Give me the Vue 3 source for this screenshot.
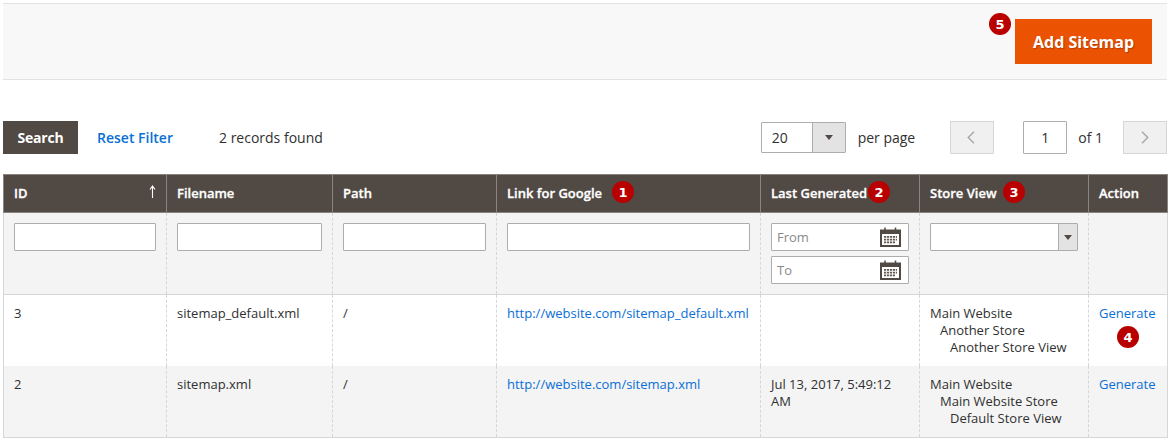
<template>
  <div class="page">
    <div class="page-actions">
      <span class="badge">5</span>
      <button class="add-btn">Add Sitemap</button>
    </div>

    <div class="toolbar">
      <button class="search-btn">Search</button>
      <a class="reset-link">Reset Filter</a>
      <span class="records">2 records found</span>
      <div class="pager">
        <div class="per-page">
          <span class="per-value">20</span>
          <span class="per-arrow"><i class="caret"></i></span>
        </div>
        <span class="per-label">per page</span>
        <button class="page-btn prev">
          <svg width="8" height="13" viewBox="0 0 8 13"><path d="M7 .7 1.300 6.500 7 12.300" fill="none" stroke="#a9a9a9" stroke-width="1.500" /></svg>
        </button>
        <div class="page-input">1</div>
        <span class="page-of">of 1</span>
        <button class="page-btn">
          <svg width="8" height="13" viewBox="0 0 8 13"><path d="M1 .7 6.700 6.500 1 12.300" fill="none" stroke="#a9a9a9" stroke-width="1.500" /></svg>
        </button>
      </div>
    </div>

    <table class="grid">
      <colgroup>
        <col v-for="w in colWidths" :key="w" :style="{ width: w + 'px' }" />
      </colgroup>
      <thead>
        <tr>
          <th class="sorted">ID
            <svg class="sort-arrow" width="7" height="13" viewBox="0 0 7 13"><path d="M3.500 13V1.500M1 4.500 3.500 1 6 4.500" fill="none" stroke="#fff" stroke-width="1.100" /></svg>
          </th>
          <th>Filename</th>
          <th>Path</th>
          <th>Link for Google<span class="badge in-head first">1</span></th>
          <th>Last Generated<span class="badge in-head second">2</span></th>
          <th>Store View<span class="badge in-head third">3</span></th>
          <th>Action</th>
        </tr>
      </thead>
      <tbody>
        <tr class="filters">
          <td><input class="text-input" /></td>
          <td><input class="text-input" /></td>
          <td><input class="text-input" /></td>
          <td><input class="text-input" /></td>
          <td>
            <div v-for="label in ['From', 'To']" :key="label" class="date-input">
              <span>{{ label }}</span>
              <svg width="21" height="20" viewBox="0 0 21 20">
                <path d="M0 2.500h21V20H0z" fill="#514943" />
                <path d="M2 7h17v11H2z" fill="#fff" />
                <path d="M5 .5v4M15.500.5v4" stroke="#514943" stroke-width="1.500" />
                <path d="M4 9h13v1.700H4zM4 11.800h13v1.700H4zM4 14.600h11v1.700H4z" fill="#5f5853" />
                <path d="M6.500 8.500v8.500M9.500 8.500v8.500M12.500 8.500v8.500M15.500 8.500v8.500" stroke="#fff" stroke-width=".8" />
              </svg>
            </div>
          </td>
          <td>
            <div class="store-select"><span class="store-arrow"><i class="caret"></i></span></div>
          </td>
          <td></td>
        </tr>
        <tr v-for="(row, i) in rows" :key="row.id" :class="{ alt: i % 2 === 1 }">
          <td>{{ row.id }}</td>
          <td>{{ row.filename }}</td>
          <td>/</td>
          <td><a class="link">{{ row.link }}</a></td>
          <td>{{ row.generated }}</td>
          <td>
            <div>Main Website</div>
            <div class="indent1">{{ row.store }}</div>
            <div class="indent2">{{ row.view }}</div>
          </td>
          <td>
            <a class="link">Generate</a>
            <span v-if="i === 0" class="badge in-cell">4</span>
          </td>
        </tr>
      </tbody>
    </table>
  </div>
</template>

<script setup>
const colWidths = [163, 166, 164, 264, 159, 169, 79]

const rows = [
  {
    id: 3,
    filename: 'sitemap_default.xml',
    link: 'http://website.com/sitemap_default.xml',
    generated: '',
    store: 'Another Store',
    view: 'Another Store View',
  },
  {
    id: 2,
    filename: 'sitemap.xml',
    link: 'http://website.com/sitemap.xml',
    generated: 'Jul 13, 2017, 5:49:12 AM',
    store: 'Main Website Store',
    view: 'Default Store View',
  },
]
</script>

<style>
body {
  background: #fff;
}
</style>

<style scoped>
.page {
  width: 1164px;
  padding: 3px 3px 0;
  font-family: "Open Sans", sans-serif;
  font-size: 13px;
  line-height: 17px;
  color: #303030;
}

.page-actions {
  display: flex;
  align-items: flex-start;
  justify-content: flex-end;
  height: 75px;
  padding-right: 15px;
  background: #f8f8f8;
  border-top: 1px solid #e3e3e3;
  border-bottom: 1px solid #e3e3e3;
}

.badge {
  display: inline-flex;
  align-items: center;
  justify-content: center;
  width: 22px;
  height: 22px;
  border-radius: 50%;
  background: #b90000;
  color: #fff;
  font-family: "DejaVu Sans", sans-serif;
  font-size: 13px;
  font-weight: 700;
  line-height: 1;
}

.page-actions .badge {
  margin: 9px 4px 0 0;
}

.add-btn {
  width: 137px;
  height: 45px;
  margin-top: 15px;
  border: 0;
  background: #eb5202;
  color: #fff;
  font: 700 16px "Open Sans", sans-serif;
  text-shadow: 1px 1px 1px rgba(0, 0, 0, .25);
}

.toolbar {
  display: flex;
  align-items: center;
  height: 33px;
  margin-top: 41px;
}

.search-btn {
  width: 75px;
  height: 33px;
  border: 0;
  background: #514943;
  color: #fff;
  font: 700 14px "Open Sans", sans-serif;
  letter-spacing: -.2px;
}

.reset-link {
  margin-left: 19px;
  color: #0a6fd6;
  font-size: 14px;
  font-weight: 600;
}

.records {
  margin-left: 46px;
  font-size: 14px;
}

.pager {
  display: flex;
  align-items: center;
  margin-left: auto;
  font-size: 14px;
}

.per-page {
  display: flex;
  width: 85px;
  height: 31px;
  box-sizing: border-box;
  border: 1px solid #adadad;
  border-radius: 1px;
  background: #fff;
}

.per-value {
  flex: 1;
  padding-left: 10px;
  line-height: 29px;
}

.per-arrow,
.store-arrow {
  display: flex;
  align-items: center;
  justify-content: center;
  border-left: 1px solid #adadad;
  background: #e3e3e3;
}

.per-arrow {
  width: 32px;
}

.store-arrow {
  width: 18px;
  height: 100%;
  margin-left: auto;
}

.caret {
  width: 0;
  height: 0;
  border-top: 5px solid #514943;
  border-left: 4px solid transparent;
  border-right: 4px solid transparent;
}

.per-label {
  margin: 0 35px 0 12px;
}

.page-btn {
  display: flex;
  align-items: center;
  justify-content: center;
  width: 44px;
  height: 33px;
  padding: 0;
  border: 1px solid #d6d6d6;
  background: #f0f0f0;
}

.page-btn.prev {
  padding-right: 3px;
}

.page-input {
  width: 44px;
  height: 33px;
  margin-left: 29px;
  box-sizing: border-box;
  border: 1px solid #adadad;
  border-radius: 1px;
  text-align: center;
  line-height: 31px;
}

.page-of {
  margin: 0 20px 0 11px;
}

.grid {
  width: 1164px;
  margin-top: 20px;
  border-collapse: collapse;
  table-layout: fixed;
}

th {
  position: relative;
  height: 38px;
  box-sizing: border-box;
  padding: 0 10px;
  background: #514943;
  border: 1px solid #8a837f;
  color: #fff;
  font-weight: 600;
  -webkit-text-stroke: .3px #fff;
  text-align: left;
}

.sort-arrow {
  position: absolute;
  top: 10px;
  right: 10px;
}

.badge.in-head {
  position: absolute;
  top: 6px;
  -webkit-text-stroke: 0;
}

.in-head.first {
  left: 115px;
}

.in-head.second {
  left: 107px;
}

.in-head.third {
  left: 83px;
}

.badge.in-cell {
  display: flex;
  margin: 4px 0 0 18px;
}

td {
  box-sizing: border-box;
  padding: 10px 10px 0;
  vertical-align: top;
  border-left: 1px dashed #d6d6d6;
  border-right: 1px dashed #d6d6d6;
}

tbody tr {
  height: 71px;
  border-bottom: 1px solid #d6d6d6;
}

tbody tr:nth-child(2) {
  border-bottom: 0;
}

tbody tr:last-child {
  height: 72px;
}

tbody td:first-child {
  border-left: 1px solid #d6d6d6;
}

tbody td:last-child {
  border-right: 1px solid #d6d6d6;
}

.filters {
  height: 82px;
  background: #f4f4f4;
}

.alt {
  background: #f4f4f4;
}

.text-input {
  display: block;
  width: 100%;
  height: 28px;
  box-sizing: border-box;
  border: 1px solid #adadad;
  border-radius: 1px;
  background: #fff;
}

.date-input {
  display: flex;
  align-items: center;
  justify-content: space-between;
  height: 28px;
  margin-bottom: 5px;
  padding: 0 7px 0 5px;
  box-sizing: border-box;
  border: 1px solid #adadad;
  border-radius: 1px;
  background: #fff;
  color: #8a8a8a;
}

.store-select {
  display: flex;
  height: 28px;
  box-sizing: border-box;
  border: 1px solid #adadad;
  border-radius: 1px;
  background: #fff;
}

.link {
  color: #0a6fd6;
}

.indent1 {
  padding-left: 10px;
}

.indent2 {
  padding-left: 20px;
}
</style>
